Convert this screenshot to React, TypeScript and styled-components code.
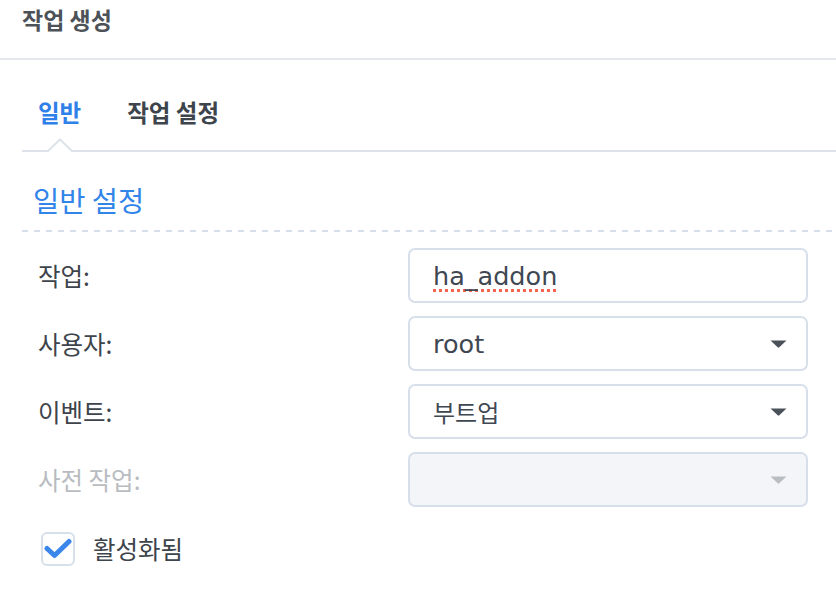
import React from "react";
import styled, { createGlobalStyle } from "styled-components";

const GlobalStyle = createGlobalStyle`
  html, body { margin: 0; padding: 0; background: #ffffff; }
  * { box-sizing: border-box; }
  body { font-family: "Noto Sans CJK KR", "Noto Sans", sans-serif; }
`;

const Page = styled.div`
  width: 836px;
  height: 602px;
  overflow: hidden;
  background: #ffffff;
  display: flex;
  flex-direction: column;
`;

const Header = styled.header`
  height: 60px;
  flex: none;
  padding: 5px 0 0 22px;
  border-bottom: 2px solid #e4e8ee;
`;

const Title = styled.h1`
  margin: 0;
  font-size: 23px;
  line-height: 28px;
  font-weight: 700;
  color: #4d5258;
`;

const Body = styled.div`
  margin-left: 22px;
  display: flex;
  flex-direction: column;
`;

const TabBar = styled.nav`
  height: 92px;
  flex: none;
  padding: 38px 0 0 16px;
  display: flex;
  gap: 46px;
  border-bottom: 2px solid #dde3ea;
`;

const Tab = styled.div<{ $active?: boolean }>`
  position: relative;
  height: 52px;
  font-size: 23.5px;
  line-height: 28px;
  font-weight: 700;
  color: ${(p) => (p.$active ? "#2f80e8" : "#3d444b")};
`;

const Notch = styled.svg`
  position: absolute;
  left: 50%;
  bottom: -3px;
  transform: translateX(-50%);
`;

const SectionTitle = styled.h2`
  margin: 31px 0 0 11px;
  font-size: 28.5px;
  line-height: 34px;
  font-weight: 400;
  color: #3184e8;
`;

const DashedRule = styled.div`
  margin-top: 13px;
  height: 2px;
  background-image: linear-gradient(to right, #d6dee7 50%, transparent 50%);
  background-size: 12px 2px;
`;

const Form = styled.div`
  margin-top: 16px;
  padding-left: 16px;
  display: grid;
  grid-template-columns: 370px 400px;
  row-gap: 13px;
  align-items: center;
`;

const Label = styled.label<{ $disabled?: boolean }>`
  font-size: 24.5px;
  line-height: 30px;
  color: ${(p) => (p.$disabled ? "#b8bcc1" : "#3d444b")};
`;

const Field = styled.div<{ $disabled?: boolean }>`
  height: 55px;
  display: flex;
  align-items: center;
  justify-content: space-between;
  padding: 0 19px 0 23px;
  border: 2px solid #d7e0ea;
  border-radius: 7px;
  background: ${(p) => (p.$disabled ? "#f3f5f8" : "#ffffff")};
`;

const Value = styled.span<{ $latin?: boolean; $misspelled?: boolean }>`
  font-family: ${(p) =>
    p.$latin ? `"DejaVu Sans", "Noto Sans CJK KR", sans-serif` : `"Noto Sans CJK KR", sans-serif`};
  font-size: ${(p) => (p.$latin ? "25.5px" : "24px")};
  line-height: 30px;
  color: #3f4852;
  ${(p) =>
    p.$misspelled
      ? `text-decoration: underline dotted #f2664f;
         text-decoration-thickness: 2.5px;
         text-underline-offset: 4px;`
      : ""}
`;

const CheckRow = styled.div`
  margin: 25px 0 0 19px;
  display: flex;
  align-items: center;
  gap: 18px;
`;

const CheckBox = styled.span`
  width: 34px;
  height: 34px;
  flex: none;
  border: 2px solid #d7e0ea;
  border-radius: 6px;
  display: flex;
  align-items: center;
  justify-content: center;
  background: #fff;
`;

const CheckLabel = styled.span`
  font-size: 24.5px;
  line-height: 30px;
  color: #3d444b;
`;

const Caret = ({ disabled }: { disabled?: boolean }) => (
  <svg width="17" height="8" viewBox="0 0 17 8">
    <path d="M0.5 0.5 H16.5 L9.3 7.3 Q8.5 8 7.7 7.3 Z" fill={disabled ? "#babec3" : "#4b5159"} />
  </svg>
);

export default function App() {
  return (
    <Page>
      <GlobalStyle />
      <Header>
        <Title>작업 생성</Title>
      </Header>
      <Body>
        <TabBar>
          <Tab $active>
            일반
            <Notch width="28" height="15" viewBox="0 0 28 15">
              <polyline points="0,13 2,13 14,1.5 26,13 28,13 28,15 0,15" fill="#fff" stroke="none" />
              <polyline points="0,13 2,13 14,1.5 26,13 28,13" fill="none" stroke="#dde3ea" strokeWidth="2" />
            </Notch>
          </Tab>
          <Tab>작업 설정</Tab>
        </TabBar>
        <SectionTitle>일반 설정</SectionTitle>
        <DashedRule />
        <Form>
          <Label>작업:</Label>
          <Field>
            <Value $latin $misspelled>ha_addon</Value>
          </Field>
          <Label>사용자:</Label>
          <Field>
            <Value $latin>root</Value>
            <Caret />
          </Field>
          <Label>이벤트:</Label>
          <Field>
            <Value>부트업</Value>
            <Caret />
          </Field>
          <Label $disabled>사전 작업:</Label>
          <Field $disabled>
            <span />
            <Caret disabled />
          </Field>
        </Form>
        <CheckRow>
          <CheckBox>
            <svg width="28" height="22" viewBox="0 0 28 22">
              <path d="M3 10.5 L10.5 17.5 L25 3.5" fill="none" stroke="#3a86eb" strokeWidth="5" strokeLinecap="round" strokeLinejoin="round" />
            </svg>
          </CheckBox>
          <CheckLabel>활성화됨</CheckLabel>
        </CheckRow>
      </Body>
    </Page>
  );
}
